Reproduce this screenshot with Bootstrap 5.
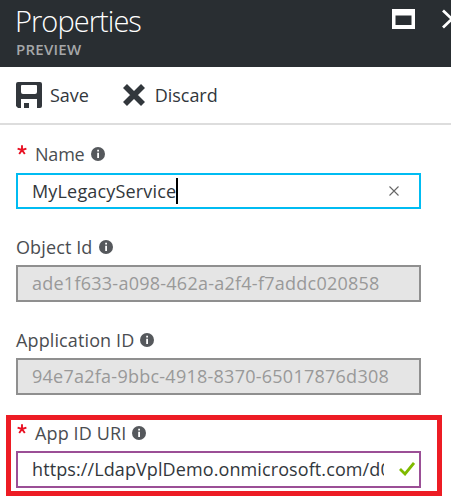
<!DOCTYPE html>
<html lang="en">
<head>
<meta charset="utf-8">
<meta name="viewport" content="width=device-width, initial-scale=1">
<title>Properties</title>
<link href="https://cdn.jsdelivr.net/npm/bootstrap@5.3.0/dist/css/bootstrap.min.css" rel="stylesheet">
<style>
body{font-family:"Open Sans","Noto Sans",sans-serif;font-size:18px;line-height:24px;color:#4a4d51;width:451px;height:497px;overflow:hidden;background:#fff}
svg{display:block;flex:none}
.blade-head{height:67px;background:#292e32;padding-left:15px}
.blade-title{font-size:29px;line-height:42px;font-weight:300;color:#fff;letter-spacing:-.95px;margin:0}
.blade-sub{font-size:15px;line-height:14px;font-weight:600;color:#a5a7a9;letter-spacing:.25px;padding-left:1px}
.win-icons{padding-top:9px;gap:27px}
.tools{height:58px;border-bottom:2px solid #ddd;padding:0 0 1px 16px;gap:34px}
.tool{background:none;border:0;padding:0;color:#32373c;gap:8px;letter-spacing:-.05px}
.tool+.tool{gap:10px}
.fields{padding-left:16px;width:421px}
.lbl{height:36px;margin-top:20px;letter-spacing:.12px}
.lbl.first{height:38px;margin-top:10px;letter-spacing:-.2px}
.star{width:19px;height:24px;padding-top:3px;padding-left:1px}
.info{margin-left:6px}
.box{height:37px;border:2px solid #8f8f8f;background:#e5e5e5;color:#999;padding:0 0 1px 14px;white-space:nowrap;letter-spacing:.25px}
.box.active{height:36px;border-color:#00bcf2;background:#fff;color:#32373c;letter-spacing:.17px}
.caret{width:2px;height:26px;background:#000}
.clear{margin-right:20px}
.callout{margin:20px 0 0 6px;width:436px;height:81px;border:5px solid #ed1c24;padding:0 0 0 5px}
.callout .lbl{height:31px;margin:0;padding-bottom:5px}
.box.valid{width:405px;border-color:#9b4f96;background:#fff;color:#32373c;letter-spacing:.1px}
.uri{width:352px;overflow:hidden}
.ok{margin-right:4px}
</style>
</head>
<body>
<header class="blade-head d-flex justify-content-between">
  <div>
    <h1 class="blade-title">Properties</h1>
    <div class="blade-sub">PREVIEW</div>
  </div>
  <div class="win-icons d-flex">
    <svg width="23" height="20"><path fill="#fff" fill-rule="evenodd" d="M0 0H23V20H0ZM3.5 6.5V16H19.5V6.5Z"/></svg>
    <svg width="9" height="20"><path d="M1 1.5L10 10L1 18.5" fill="none" stroke="#fff" stroke-width="2.8"/></svg>
  </div>
</header>
<div class="tools d-flex align-items-center">
  <button class="tool d-flex align-items-center">
    <svg width="26" height="26" viewBox="0 0 26 26"><path fill="#32373c" fill-rule="evenodd" d="M2 0H24Q26 0 26 2V24Q26 26 24 26H21V17H5V26H2L0 24V2Q0 0 2 0ZM5 4V10Q5 12 7 12H19Q21 12 21 10V4Q21 3 20 3H6Q5 3 5 4ZM8 21H13V26H8Z"/></svg>
    <span>Save</span>
  </button>
  <button class="tool d-flex align-items-center">
    <svg width="22" height="22"><path d="M2 2L20 20M20 2L2 20" stroke="#32373c" stroke-width="5.6"/></svg>
    <span>Discard</span>
  </button>
</div>
<main>
  <div class="fields">
    <div class="lbl first d-flex align-items-center">
      <div class="star"><svg width="10" height="10" viewBox="0 0 10 10"><path d="M5 5V.3M5 5L.6 3.6M5 5L9.4 3.6M5 5L2.2 9M5 5L7.8 9" stroke="#e81123" stroke-width="1.9"/></svg></div>
      <span>Name</span>
      <svg class="info" width="14" height="14" viewBox="0 0 14 14"><circle cx="7" cy="7" r="7" fill="#55585c"/><path d="M6.2 2.8H8V4.5H6.2ZM6.2 5.8H8V11H6.2Z" fill="#fff"/></svg>
    </div>
    <div class="box active d-flex align-items-center">
      <span>MyLegacyService</span><div class="caret"></div>
      <svg class="clear ms-auto" width="10" height="10"><path d="M.5 .5L9.5 9.5M9.5 .5L.5 9.5" stroke="#666" stroke-width="1.1"/></svg>
    </div>
    <div class="lbl d-flex align-items-center">
      <span>Object Id</span>
      <svg class="info" width="14" height="14" viewBox="0 0 14 14"><circle cx="7" cy="7" r="7" fill="#55585c"/><path d="M6.2 2.8H8V4.5H6.2ZM6.2 5.8H8V11H6.2Z" fill="#fff"/></svg>
    </div>
    <div class="box d-flex align-items-center"><span>ade1f633-a098-462a-a2f4-f7addc020858</span></div>
    <div class="lbl d-flex align-items-center">
      <span>Application ID</span>
      <svg class="info" width="14" height="14" viewBox="0 0 14 14"><circle cx="7" cy="7" r="7" fill="#55585c"/><path d="M6.2 2.8H8V4.5H6.2ZM6.2 5.8H8V11H6.2Z" fill="#fff"/></svg>
    </div>
    <div class="box d-flex align-items-center"><span>94e7a2fa-9bbc-4918-8370-65017876d308</span></div>
  </div>
  <section class="callout">
    <div class="lbl d-flex align-items-center">
      <div class="star"><svg width="10" height="10" viewBox="0 0 10 10"><path d="M5 5V.3M5 5L.6 3.6M5 5L9.4 3.6M5 5L2.2 9M5 5L7.8 9" stroke="#e81123" stroke-width="1.9"/></svg></div>
      <span>App ID URI</span>
      <svg class="info" width="14" height="14" viewBox="0 0 14 14"><circle cx="7" cy="7" r="7" fill="#55585c"/><path d="M6.2 2.8H8V4.5H6.2ZM6.2 5.8H8V11H6.2Z" fill="#fff"/></svg>
    </div>
    <div class="box valid d-flex align-items-center">
      <div class="uri">https://LdapVplDemo.onmicrosoft.com/d0</div>
      <svg class="ok ms-auto" width="16" height="14"><path d="M1 7L6 12L15 1" fill="none" stroke="#7fba00" stroke-width="2.8"/></svg>
    </div>
  </section>
</main>
<script src="https://cdn.jsdelivr.net/npm/bootstrap@5.3.0/dist/js/bootstrap.bundle.min.js"></script>
</body>
</html>
